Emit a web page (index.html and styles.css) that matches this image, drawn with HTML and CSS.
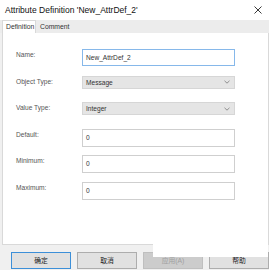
FILE: index.html
```html
<!DOCTYPE html>
<html lang="en">
<head>
  <meta charset="UTF-8" />
  <title>Attribute Definition</title>
  <link rel="stylesheet" href="styles.css">
</head>
<body>
  <div class="window">
    <div class="titlebar">
      <span class="title">Attribute Definition 'New_AttrDef_2'</span>
      <svg class="close" width="8" height="8" viewBox="0 0 8 8">
        <path d="M0.5 0.5 L7.5 7.5 M7.5 0.5 L0.5 7.5" stroke="#222" stroke-width="0.9" fill="none"/>
      </svg>
    </div>
    <div class="tabs">
      <div class="tab active">Definition</div>
      <div class="tab">Comment</div>
    </div>
    <div class="panel">
      <div class="row">
        <span class="label">Name:</span>
        <div class="field name">New_AttrDef_2</div>
      </div>
      <div class="row">
        <span class="label">Object Type:</span>
        <div class="field select">Message
          <svg class="chev" width="6" height="4" viewBox="0 0 6 4"><path d="M0.5 0.8 L3 3.2 L5.5 0.8" stroke="#777" stroke-width="0.8" fill="none"/></svg>
        </div>
      </div>
      <div class="row">
        <span class="label">Value Type:</span>
        <div class="field select">Integer
          <svg class="chev" width="6" height="4" viewBox="0 0 6 4"><path d="M0.5 0.8 L3 3.2 L5.5 0.8" stroke="#777" stroke-width="0.8" fill="none"/></svg>
        </div>
      </div>
      <div class="row">
        <span class="label">Default:</span>
        <div class="field">0</div>
      </div>
      <div class="row">
        <span class="label">Minimum:</span>
        <div class="field">0</div>
      </div>
      <div class="row">
        <span class="label">Maximum:</span>
        <div class="field">0</div>
      </div>
    </div>
    <div class="buttons">
      <div class="btn default">确定</div>
      <div class="btn">取消</div>
      <div class="btn disabled">应用(A)</div>
      <div class="btn">帮助</div>
    </div>
    <div class="cover"></div>
  </div>
</body>
</html>
```

FILE: styles.css
```css
* {
  box-sizing: border-box;
  margin: 0;
  padding: 0;
}
body {
  background: #fff;
  font-family: "Liberation Sans", "Noto Sans CJK SC", sans-serif;
  color: #333;
}
.window {
  position: relative;
  width: 269px;
  height: 270px;
  background: #f0f0f0;
}
.titlebar {
  height: 20px;
  background: #fff;
  display: flex;
  align-items: center;
  justify-content: space-between;
  padding: 0 7px 0 5px;
}
.title {
  font-size: 8.5px;
  color: #111;
}
.tabs {
  display: flex;
  height: 13px;
  padding-left: 2px;
  background: #ececec;
}
.tab {
  width: 34px;
  padding-left: 3px;
  font-size: 6.8px;
  line-height: 13px;
  color: #333;
}
.tab.active {
  background: #fff;
  border: 1px solid #d9d9d9;
  border-bottom: none;
  line-height: 12px;
  margin-right: 1px;
}
.panel {
  margin-left: 2px;
  width: 267px;
  height: 212px;
  background: #fff;
  border: 1px solid #d9d9d9;
  border-top: none;
  padding-top: 16px;
}
.row {
  display: flex;
  align-items: flex-start;
  height: 26.6px;
  padding-left: 13px;
}
.label {
  width: 66px;
  font-size: 6.6px;
  line-height: 11px;
  color: #555;
}
.field {
  width: 153px;
  height: 18px;
  border: 1px solid #cfcfcf;
  background: #fff;
  font-size: 6.6px;
  line-height: 16px;
  padding-left: 3px;
  color: #333;
}
.field.name {
  height: 17px;
  line-height: 15px;
  border-color: #86b8ea;
}
.field.select {
  height: 13px;
  line-height: 11px;
  background: #e5e5e5;
  border-color: #d6d6d6;
  display: flex;
  align-items: center;
  justify-content: space-between;
  padding-right: 4px;
}
.buttons {
  display: flex;
  gap: 6px;
  padding: 7px 0 0 11px;
}
.btn {
  width: 60px;
  height: 17px;
  background: #e1e1e1;
  border: 1px solid #adadad;
  font-size: 6.8px;
  line-height: 15px;
  text-align: center;
  color: #222;
}
.btn.default {
  border-color: #3c8fd8;
}
.btn.disabled {
  background: #cccccc;
  border-color: #bfbfbf;
  color: #a0a0a0;
}
.cover {
  position: absolute;
  left: 153px;
  top: 238px;
  width: 115px;
  height: 19px;
  background: #fff;
}
```
